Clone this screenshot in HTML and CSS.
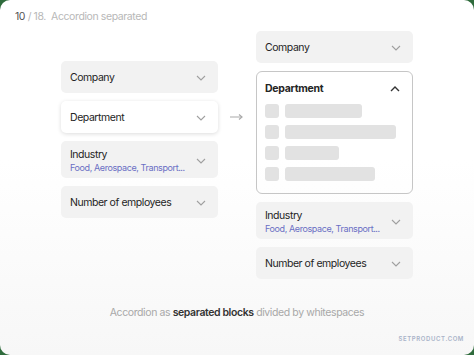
FILE: index.html
```html
<!DOCTYPE html>
<html lang="en">
<head>
  <meta charset="UTF-8">
  <meta name="viewport" content="width=device-width, initial-scale=1.0">
  <title>Accordion separated</title>
  <link rel="stylesheet" href="styles.css">
</head>
<body>
  <div class="frame">
    <div class="header"><span class="num">10</span> / 18.&nbsp; Accordion separated</div>

    <div class="stage">
      <!-- Collapsed state -->
      <div class="column left">
        <div class="item">
          <span class="label">Company</span>
          <svg class="chev" width="10" height="6" viewBox="0 0 10 6"><polyline points="1,1 5,5 9,1"/></svg>
        </div>
        <div class="item raised">
          <span class="label">Department</span>
          <svg class="chev" width="10" height="6" viewBox="0 0 10 6"><polyline points="1,1 5,5 9,1"/></svg>
        </div>
        <div class="item tall">
          <div>
            <div class="label">Industry</div>
            <div class="sub">Food, Aerospace, Transport...</div>
          </div>
          <svg class="chev" width="10" height="6" viewBox="0 0 10 6"><polyline points="1,1 5,5 9,1"/></svg>
        </div>
        <div class="item">
          <span class="label">Number of employees</span>
          <svg class="chev" width="10" height="6" viewBox="0 0 10 6"><polyline points="1,1 5,5 9,1"/></svg>
        </div>
      </div>

      <div class="arrow">
        <svg width="14" height="8" viewBox="0 0 14 8"><line x1="0" y1="4" x2="12" y2="4"/><polyline points="9,1.5 12,4 9,6.5"/></svg>
      </div>

      <!-- Expanded state -->
      <div class="column right">
        <div class="item">
          <span class="label">Company</span>
          <svg class="chev" width="10" height="6" viewBox="0 0 10 6"><polyline points="1,1 5,5 9,1"/></svg>
        </div>
        <div class="panel">
          <div class="panel-head">
            <span class="label bold">Department</span>
            <svg class="chev up" width="10" height="6" viewBox="0 0 10 6"><polyline points="1,5 5,1 9,5"/></svg>
          </div>
          <div class="row"><span class="box"></span><span class="bar w1"></span></div>
          <div class="row"><span class="box"></span><span class="bar w2"></span></div>
          <div class="row"><span class="box"></span><span class="bar w3"></span></div>
          <div class="row"><span class="box"></span><span class="bar w4"></span></div>
        </div>
        <div class="item tall">
          <div>
            <div class="label">Industry</div>
            <div class="sub">Food, Aerospace, Transport...</div>
          </div>
          <svg class="chev" width="10" height="6" viewBox="0 0 10 6"><polyline points="1,1 5,5 9,1"/></svg>
        </div>
        <div class="item">
          <span class="label">Number of employees</span>
          <svg class="chev" width="10" height="6" viewBox="0 0 10 6"><polyline points="1,1 5,5 9,1"/></svg>
        </div>
      </div>
    </div>

    <p class="caption">Accordion as <strong>separated blocks</strong> divided by whitespaces</p>
    <div class="brand">SETPRODUCT.COM</div>
  </div>
</body>
</html>
```

FILE: styles.css
```css
body {
  margin: 0;
  background: #2f6b3c;
  font-family: Inter, "Noto Sans", sans-serif;
}
.frame {
  width: 474px;
  height: 355px;
  border-radius: 10px;
  overflow: hidden;
  background: linear-gradient(#ffffff 0%, #ffffff 45%, #f7f7f7 100%);
}
.header {
  padding: 10px 0 0 15px;
  height: 21px;
  font-size: 10.5px;
  line-height: 14px;
  letter-spacing: -0.4px;
  color: #b8b8b8;
}
.header .num {
  color: #555;
}
.stage {
  display: flex;
  align-items: flex-start;
}
.column {
  width: 157px;
  display: flex;
  flex-direction: column;
  gap: 8px;
}
.left {
  margin: 30px 0 0 61px;
}
.item {
  height: 32px;
  background: #f2f2f2;
  border-radius: 5px;
  display: flex;
  align-items: center;
  justify-content: space-between;
  padding: 1px 12px 0 9px;
  box-sizing: border-box;
}
.item.tall {
  height: 37px;
  padding-top: 2px;
}
.item.raised {
  background: #fff;
  box-shadow: 0 1px 4px rgba(0, 0, 0, 0.14);
}
.label {
  font-size: 10.5px;
  line-height: 14px;
  letter-spacing: -0.45px;
  color: #242424;
}
.label.bold {
  font-weight: 700;
  letter-spacing: -0.3px;
}
.sub {
  font-size: 9px;
  line-height: 12px;
  letter-spacing: -0.4px;
  white-space: nowrap;
  color: #6a6fc4;
}
.chev polyline {
  fill: none;
  stroke: #a0a0a0;
  stroke-width: 1.1;
}
.chev.up polyline {
  stroke: #333;
  stroke-width: 1.4;
}
.arrow {
  width: 38px;
  display: flex;
  justify-content: center;
  padding-top: 82px;
}
.arrow line, .arrow polyline {
  fill: none;
  stroke: #aaa;
  stroke-width: 1.2;
}
.panel {
  height: 123px;
  border: 1px solid #c6c6c6;
  border-radius: 6px;
  box-sizing: border-box;
  padding: 0 12px 0 8px;
}
.panel-head {
  height: 32px;
  padding-top: 1px;
  box-sizing: border-box;
  display: flex;
  align-items: center;
  justify-content: space-between;
}
.row {
  display: flex;
  gap: 6px;
  margin-bottom: 7px;
}
.box, .bar {
  height: 14px;
  border-radius: 3px;
  background: #e2e2e2;
}
.box {
  width: 14px;
}
.w1 { width: 77px; }
.w2 { width: 111px; }
.w3 { width: 54px; }
.w4 { width: 90px; }
.caption {
  margin: 27px 0 0;
  text-align: center;
  font-size: 10.5px;
  line-height: 14px;
  letter-spacing: -0.4px;
  color: #a8a8a8;
}
.caption strong {
  font-weight: 600;
  color: #333;
}
.brand {
  margin: 15px 10px 0 0;
  text-align: right;
  font-size: 6px;
  line-height: 8px;
  letter-spacing: 0.6px;
  font-weight: 600;
  color: #a9b3c8;
}
```
